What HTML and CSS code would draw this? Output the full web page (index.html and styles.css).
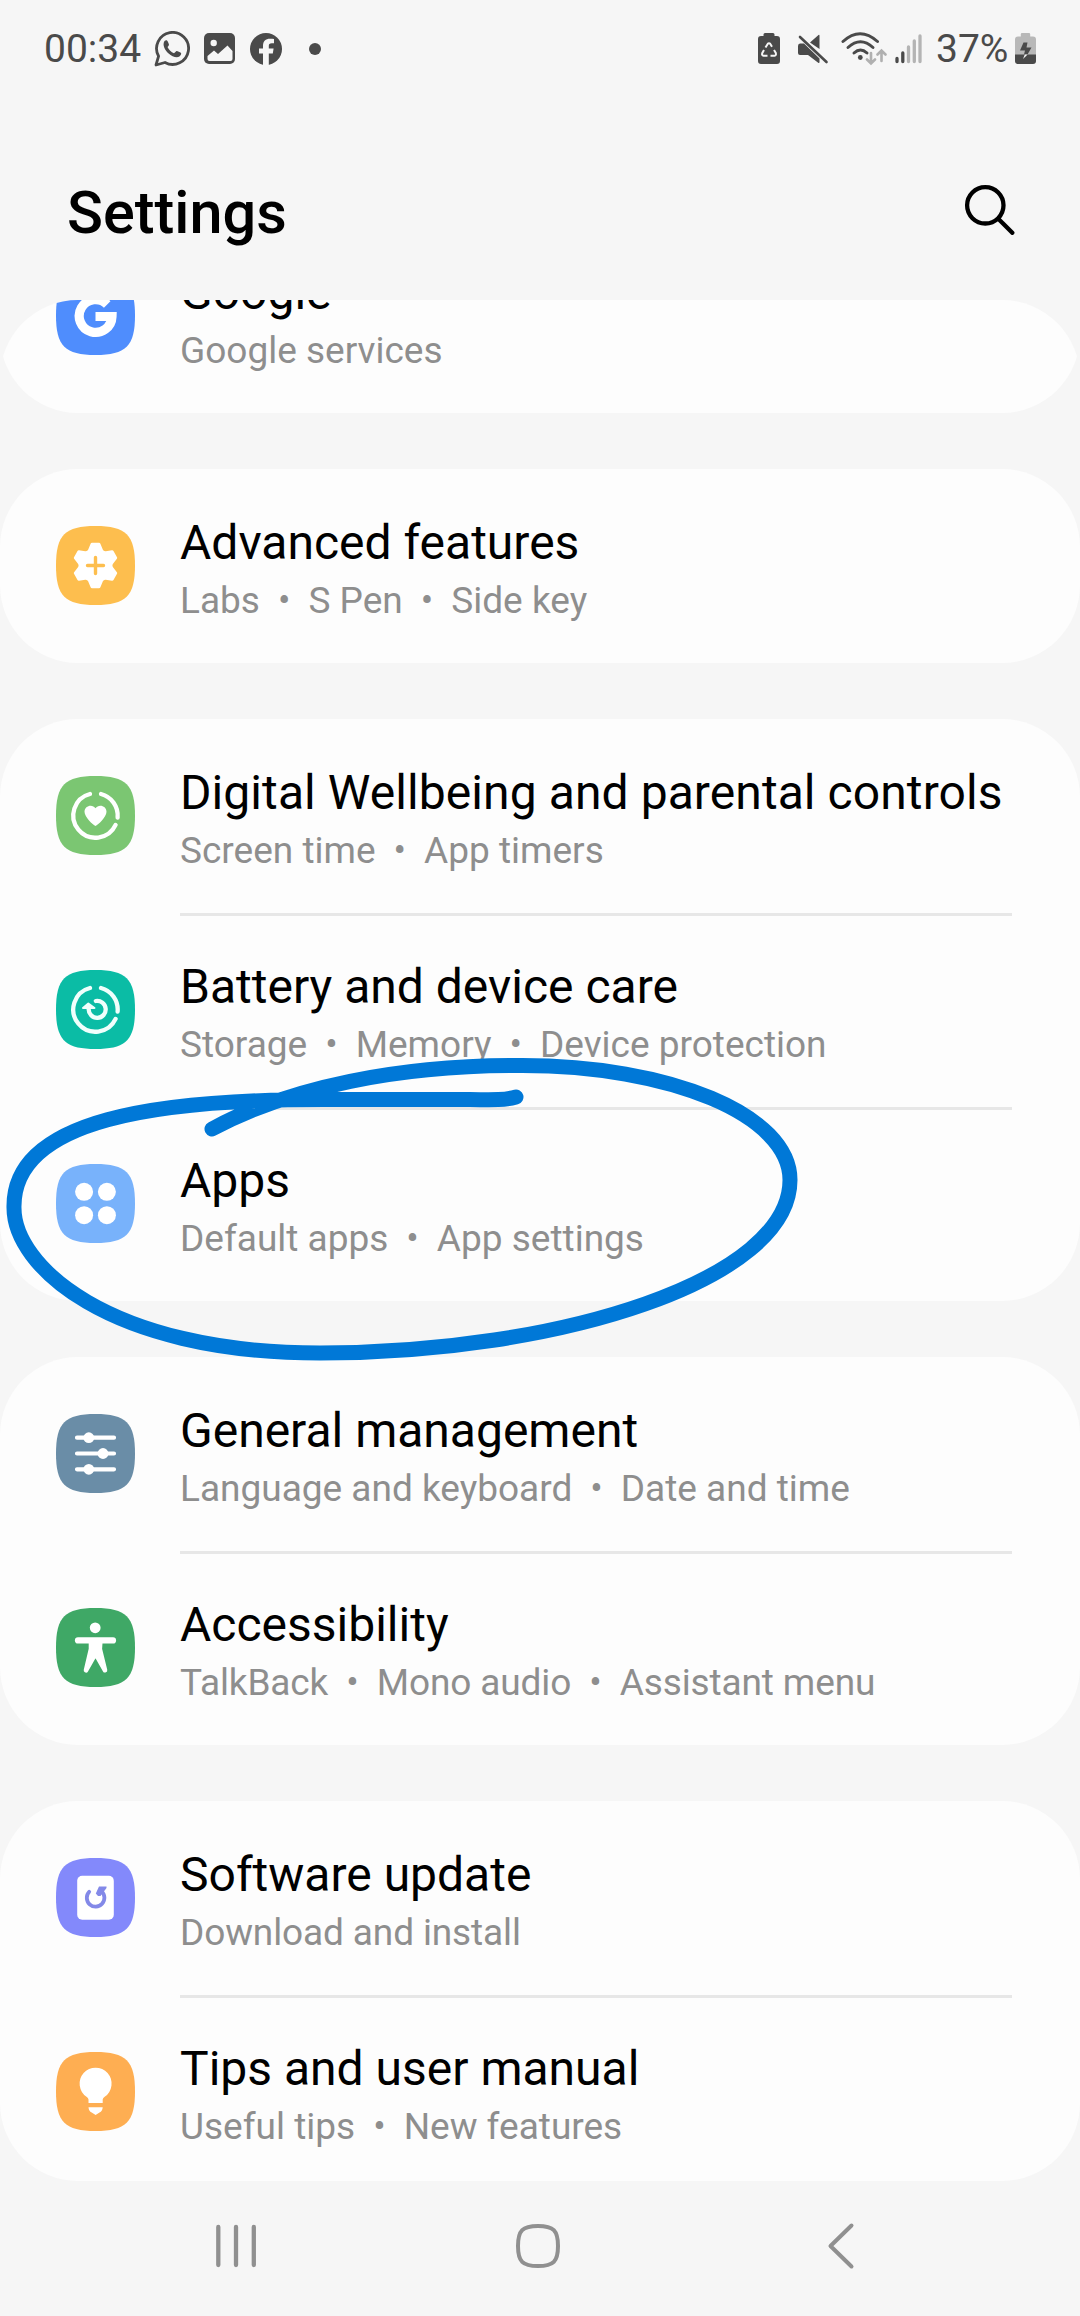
FILE: index.html
```html
<!DOCTYPE html>
<html lang="en">
<head>
<meta charset="utf-8">
<title>Settings</title>
<link rel="stylesheet" href="styles.css">
</head>
<body>
<div class="screen">
  <div class="status">
    <span class="status-text clock">00:34</span>
    <svg class="s-whatsapp" width="36" height="36" viewBox="0 0 36 36" fill="none" stroke="#4a4a4a"><path d="M2 34l2.600-8.800A16 16 0 1 1 11 31.500z" stroke-width="2.800" stroke-linejoin="round"/><path d="M10.500 10c1.600-1.300 2.800-.8 3.400.8l1 2.400c.4 1.200-.8 2-1.400 2.800 1.400 3 3.600 5 6.500 6.200l2.200-2c.7-.6 3.600 1 4.600 1.600 1 .8 0 2.800-1.400 3.700-2.800 1.600-7.400.1-10.800-3-3.600-3.200-6.600-8.600-4.100-12.500z" fill="#4a4a4a" stroke="none"/></svg>
    <svg class="s-gallery" width="31" height="31" viewBox="0 0 31 31"><rect width="31" height="31" rx="5" fill="#4a4a4a"/><circle cx="9.700" cy="10" r="3.200" fill="#f6f6f6"/><path d="M3.500 23l6.500-5.500 4 3.500 9.500-8.500 5 5.500v8q0 2-2 2H5.500q-2 0-2-2z" fill="#f6f6f6"/></svg>
    <svg class="s-facebook" width="32" height="32" viewBox="0 0 32 32"><circle cx="16" cy="16" r="16" fill="#4a4a4a"/><path d="M13 33V20.500H9v-5h4V13c0-5 2.600-7.300 7-7.300 1.700 0 3 .2 4 .4v4.200h-2.200c-2.300 0-3 1-3 2.800v2.400h4.800l-.8 5h-4V33z" fill="#f6f6f6"/></svg>
    <span class="more-dot"></span>
    <span class="spacer"></span>
    <svg class="s-recycle" width="22" height="31" viewBox="0 0 22 31"><path d="M7 0h8q1.500 0 1.500 1.500V3H19q3 0 3 3v22q0 3-3 3H3q-3 0-3-3V6q0-3 3-3h2.500V1.500Q5.500 0 7 0z" fill="#4a4a4a"/><g fill="none" stroke="#f6f6f6" stroke-width="2"><path d="M7.500 14.500L9.800 10.800Q11 9.500 12.200 10.800L14 13.700"/><path d="M16 17l1.800 3Q18.500 22.500 16.500 22.700H12.500"/><path d="M9.500 22.700H5.500Q3.500 22.500 4.300 20L6 17"/></g></svg>
    <svg class="s-mute" width="32" height="30" viewBox="0 0 32 30" fill="#4a4a4a"><path d="M13 8.500L21.500 1q1-.6 1 .8V15zM3 9.500H7L22.500 24.500V28q0 1.600-1.300.8L11 21H3Q1 21 1 19V12Q1 9.500 3 9.500z"/><path d="M3 3L29.500 28" stroke="#4a4a4a" stroke-width="2.600" stroke-linecap="round"/></svg>
    <svg class="s-wifi" width="46" height="34" viewBox="0 0 46 34" fill="none" stroke-linecap="round"><g stroke="#4a4a4a" stroke-width="3"><path d="M2 9.500Q19 -6 36.500 9.500"/><path d="M7 15.500Q19.500 4 32 15.500"/><path d="M13 21Q19.500 15 26 21"/></g><circle cx="19.300" cy="25.500" r="2.400" fill="#4a4a4a"/><path d="M30 21v10M26 27.500l4 4 4-4M40.500 29V19M36.500 22.500l4-4 4 4" stroke="#b0b0b0" stroke-width="2.600"/></svg>
    <svg class="s-signal" width="28" height="30" viewBox="0 0 28 30" stroke-width="3.300" stroke-linecap="round"><path d="M2 24.500v3M7.800 19v8.500" stroke="#4a4a4a"/><path d="M13.500 13v14.500M19.300 7v20.500M25 2v25.500" stroke="#b4b4b4"/></svg>
    <span class="status-text percent">37%</span>
    <svg class="s-battery" width="21" height="31" viewBox="0 0 21 31"><path d="M7 0h7q1.200 0 1.200 1.200V3.500H18q3 0 3 3V22H0V6.500q0-3 3-3h2.800V1.200Q5.800 0 7 0z" fill="#b8b8b8"/><path d="M0 21.500h21V28q0 3-3 3H3q-3 0-3-3z" fill="#4a4a4a"/><path d="M8.500 9.500h4L11.500 14.500h5L12.500 21.500H9L10 17.500H5z" fill="#4a4a4a"/><path d="M9.800 21.500h2.800L8 26z" fill="#f6f6f6"/></svg>
  </div>

  <header class="header">
    <h1 class="heading">Settings</h1>
    <svg width="52" height="52" viewBox="0 0 52 52" fill="none" stroke="#000" stroke-linecap="round"><circle cx="22.300" cy="22.300" r="18.200" stroke-width="4.300"/><path d="M36 36.500L49.300 49.800" stroke-width="4.300"/></svg>
  </header>

  <main class="viewport">
    <div class="list">
      <section class="card">
        <div class="row">
          <svg class="icon" viewBox="0 0 79 79"><path fill="#4f8dfd" d="M0 39.500C0 9 9 0 39.500 0S79 9 79 39.500 70 79 39.500 79 0 70 0 39.500Z"/><path d="M51.200 28.400A16.400 16.400 0 1 0 56 40.500H39.500" fill="none" stroke="#fff" stroke-width="9.200"/></svg>
          <div class="text"><div class="title">Google</div><div class="sub">Google services</div></div>
        </div>
      </section>

      <section class="card">
        <div class="row">
          <svg class="icon" viewBox="0 0 79 79"><path fill="#fdbe4e" d="M0 39.500C0 9 9 0 39.500 0S79 9 79 39.500 70 79 39.500 79 0 70 0 39.500Z"/><g transform="translate(39.500 39.500)" fill="#fff" stroke="#fff" stroke-width="3" stroke-linejoin="round"><circle r="15.500"/><path id="tooth" d="M-6.500 -14L-3.500 -21.300H3.500L6.500 -14z"/><use href="#tooth" transform="rotate(60)"/><use href="#tooth" transform="rotate(120)"/><use href="#tooth" transform="rotate(180)"/><use href="#tooth" transform="rotate(240)"/><use href="#tooth" transform="rotate(300)"/></g><path d="M31.500 39.500h16M39.500 31.500v16" stroke="#fdbe4e" stroke-width="3.400" stroke-linecap="round"/></svg>
          <div class="text"><div class="title">Advanced features</div><div class="sub">Labs<i>•</i>S Pen<i>•</i>Side key</div></div>
        </div>
      </section>

      <section class="card">
        <div class="row">
          <svg class="icon" viewBox="0 0 79 79"><path fill="#7bc672" d="M0 39.500C0 9 9 0 39.500 0S79 9 79 39.500 70 79 39.500 79 0 70 0 39.500Z"/><path d="M45 18A22.200 22.200 0 0 1 61.600 41.500M59.600 48.900A22.200 22.200 0 1 1 34 18" fill="none" stroke="#fff" stroke-width="4.300" stroke-linecap="round"/><path d="M39.500 50C37 49 28.500 41 28.500 35.800 28.500 29.500 36.500 27.500 39.500 32.300 42.500 27.500 50.500 29.500 50.500 35.800 50.500 41 42 49 39.500 50z" fill="#fff"/></svg>
          <div class="text"><div class="title title-long">Digital Wellbeing and parental controls</div><div class="sub">Screen time<i>•</i>App timers</div></div>
        </div>
        <div class="row">
          <svg class="icon" viewBox="0 0 79 79"><path fill="#0bbca5" d="M0 39.500C0 9 9 0 39.500 0S79 9 79 39.500 70 79 39.500 79 0 70 0 39.500Z"/><g fill="none" stroke="#f0fffc" stroke-width="4.300" stroke-linecap="round"><path d="M45 18A22.200 22.200 0 0 1 61.600 41.500M59.600 48.900A22.200 22.200 0 1 1 34 18"/><path d="M39.800 31A8.500 8.500 0 1 1 32.700 39"/></g><path d="M27 38L32.300 33.600 38.500 38z" fill="#f0fffc" stroke="#f0fffc" stroke-width="2" stroke-linejoin="round"/></svg>
          <div class="text"><div class="title">Battery and device care</div><div class="sub">Storage<i>•</i>Memory<i>•</i>Device protection</div></div>
        </div>
        <div class="row">
          <svg class="icon" viewBox="0 0 79 79"><path fill="#78b2fb" d="M0 39.500C0 9 9 0 39.500 0S79 9 79 39.500 70 79 39.500 79 0 70 0 39.500Z"/><g fill="#fff"><circle cx="28.100" cy="27.800" r="9"/><circle cx="50.900" cy="27.800" r="9"/><circle cx="28.100" cy="51.200" r="9"/><circle cx="50.900" cy="51.200" r="9"/></g></svg>
          <div class="text"><div class="title">Apps</div><div class="sub">Default apps<i>•</i>App settings</div></div>
        </div>
      </section>

      <section class="card">
        <div class="row">
          <svg class="icon" viewBox="0 0 79 79"><path fill="#6a8da7" d="M0 39.500C0 9 9 0 39.500 0S79 9 79 39.500 70 79 39.500 79 0 70 0 39.500Z"/><path d="M21 23.700H58M21 39.500H58M21 55.300H58" stroke="#fff" stroke-width="4.200" stroke-linecap="round"/><g fill="#fff"><circle cx="32.800" cy="23.700" r="5.400"/><circle cx="47" cy="39.500" r="5.400"/><circle cx="32.800" cy="55.300" r="5.400"/></g></svg>
          <div class="text"><div class="title">General management</div><div class="sub">Language and keyboard<i>•</i>Date and time</div></div>
        </div>
        <div class="row">
          <svg class="icon" viewBox="0 0 79 79"><path fill="#3fa866" d="M0 39.500C0 9 9 0 39.500 0S79 9 79 39.500 70 79 39.500 79 0 70 0 39.500Z"/><circle cx="39.200" cy="19.800" r="5.400" fill="#fff"/><g fill="#fff" stroke="#fff" stroke-linecap="round" stroke-linejoin="round"><path d="M22 32.400H57" stroke-width="6.200"/><path d="M35 35H44.200L43.800 41 49 62.300 39.500 45.500 30 62.300 35 41z" stroke-width="4.600"/></g></svg>
          <div class="text"><div class="title">Accessibility</div><div class="sub tight">TalkBack<i>•</i>Mono audio<i>•</i>Assistant menu</div></div>
        </div>
      </section>

      <section class="card">
        <div class="row">
          <svg class="icon" viewBox="0 0 79 79"><path fill="#8389fb" d="M0 39.500C0 9 9 0 39.500 0S79 9 79 39.500 70 79 39.500 79 0 70 0 39.500Z"/><rect x="21.200" y="17.700" width="36.600" height="44" rx="5" fill="#fff"/><path d="M33.200 33.800A8.800 8.800 0 1 0 45.500 33.300" fill="none" stroke="#8389e8" stroke-width="3.800" stroke-linecap="round"/><path d="M43 28.500H50.500V30L44.500 38H42L39.800 35.500z" fill="#8389e8"/></svg>
          <div class="text"><div class="title">Software update</div><div class="sub tight">Download and install</div></div>
        </div>
        <div class="row">
          <svg class="icon" viewBox="0 0 79 79"><path fill="#feae52" d="M0 39.500C0 9 9 0 39.500 0S79 9 79 39.500 70 79 39.500 79 0 70 0 39.500Z"/><path d="M32.500 51V47.500Q32.300 46 30.500 44.800A16 16 0 1 1 48.700 44.800Q46.900 46 46.700 47.500V51zM32.500 55.200H46.700Q46.500 59 43.500 60.500L39.600 63 35.700 60.500Q32.700 59 32.500 55.200z" fill="#fff"/></svg>
          <div class="text"><div class="title">Tips and user manual</div><div class="sub">Useful tips<i>•</i>New features</div></div>
        </div>
      </section>
    </div>
  </main>

  <nav class="nav">
    <svg width="48" height="48" viewBox="0 0 48 48" fill="none" stroke="#909090" stroke-width="4.300" stroke-linecap="round"><path d="M6.300 5V43M24 5V43M41.800 5V43"/></svg>
    <svg width="48" height="48" viewBox="0 0 48 48" fill="none" stroke="#909090" stroke-width="4"><path d="M4 24C4 8.500 8.500 4 24 4S44 8.500 44 24 39.500 44 24 44 4 39.500 4 24Z"/></svg>
    <svg width="48" height="48" viewBox="0 0 48 48" fill="none" stroke="#909090" stroke-width="4" stroke-linecap="round" stroke-linejoin="round"><path d="M34.500 3.500L13.500 24L34.500 44.500"/></svg>
  </nav>

  <svg class="highlight" width="820" height="320" viewBox="0 1050 820 320" fill="none" stroke="#0078d7" stroke-width="15" stroke-linecap="round" stroke-linejoin="round"><path d="M212 1129C290 1087 400 1065 520 1065.500C670 1065 790 1115 790 1180C790 1280 560 1353 320 1353C107 1353 14 1265 14 1208C12 1118 160 1099 330 1099.500H470C495 1100 505 1100 516 1097"/></svg>
</div>
</body>
</html>
```
FILE: styles.css
```css
* { box-sizing: border-box; }
body {
  margin: 0;
  background: #f6f6f6;
  font-family: Roboto, "Liberation Sans", sans-serif;
  color: #000;
}
.screen {
  position: relative;
  display: flex;
  flex-direction: column;
  width: 1080px;
  height: 2316px;
  overflow: hidden;
}
svg { display: block; flex: none; }

/* Status bar */
.status {
  display: flex;
  align-items: center;
  height: 97px;
  padding: 0 44px;
}
.status-text {
  font-size: 39px;
  line-height: 48px;
  color: #4a4a4a;
}
.clock { width: 110px; }
.s-gallery { margin-left: 14px; }
.s-facebook { margin-left: 15px; }
.more-dot {
  width: 12px;
  height: 12px;
  margin-left: 27px;
  border-radius: 50%;
  background: #4a4a4a;
}
.spacer { flex: 1; }
.s-mute { margin-left: 17px; }
.s-wifi { margin-left: 12px; }
.s-signal { margin-left: 8px; }
.percent { width: 79px; margin-left: 13px; }

/* Title bar */
.header {
  display: flex;
  align-items: center;
  justify-content: space-between;
  height: 203px;
  padding: 20px 65px 0 67px;
}
.heading {
  margin: 9px 0 0;
  font-size: 59.4px;
  line-height: 68px;
  font-weight: 500;
}

/* Scrolled list, clipped by rounded corners */
.viewport {
  height: 1881px;
  overflow: hidden;
  border-radius: 78px;
}
.list {
  display: flex;
  flex-direction: column;
  gap: 56px;
  margin-top: -81px;
}
.card {
  border-radius: 78px;
  background: #fdfdfd;
}
.row {
  display: flex;
  height: 194px;
  padding: 0 68px 0 56px;
}
.icon {
  width: 79px;
  height: 79px;
  margin: 57px 45px 0 0;
}
.text {
  flex: 1;
  padding-top: 46px;
  white-space: nowrap;
}
.row + .row .text {
  border-top: 3px solid #e7e7e7;
  padding-top: 43px;
}
.title {
  font-size: 48px;
  line-height: 56px;
}
.title-long { letter-spacing: 0.08px; }
.sub {
  font-size: 37px;
  line-height: 44px;
  margin-top: 8px;
  color: #8e8e8e;
}
.tight { letter-spacing: -0.12px; }
.sub i {
  display: inline-block;
  width: 48.5px;
  font-style: normal;
  text-align: center;
}

/* System navigation */
.nav {
  display: grid;
  grid-template-columns: 303px 301px 306px;
  justify-items: center;
  height: 135px;
  padding: 41px 0 0 84px;
}

/* Pen stroke drawn over the list */
.highlight {
  position: absolute;
  left: 0;
  top: 1050px;
}
```
